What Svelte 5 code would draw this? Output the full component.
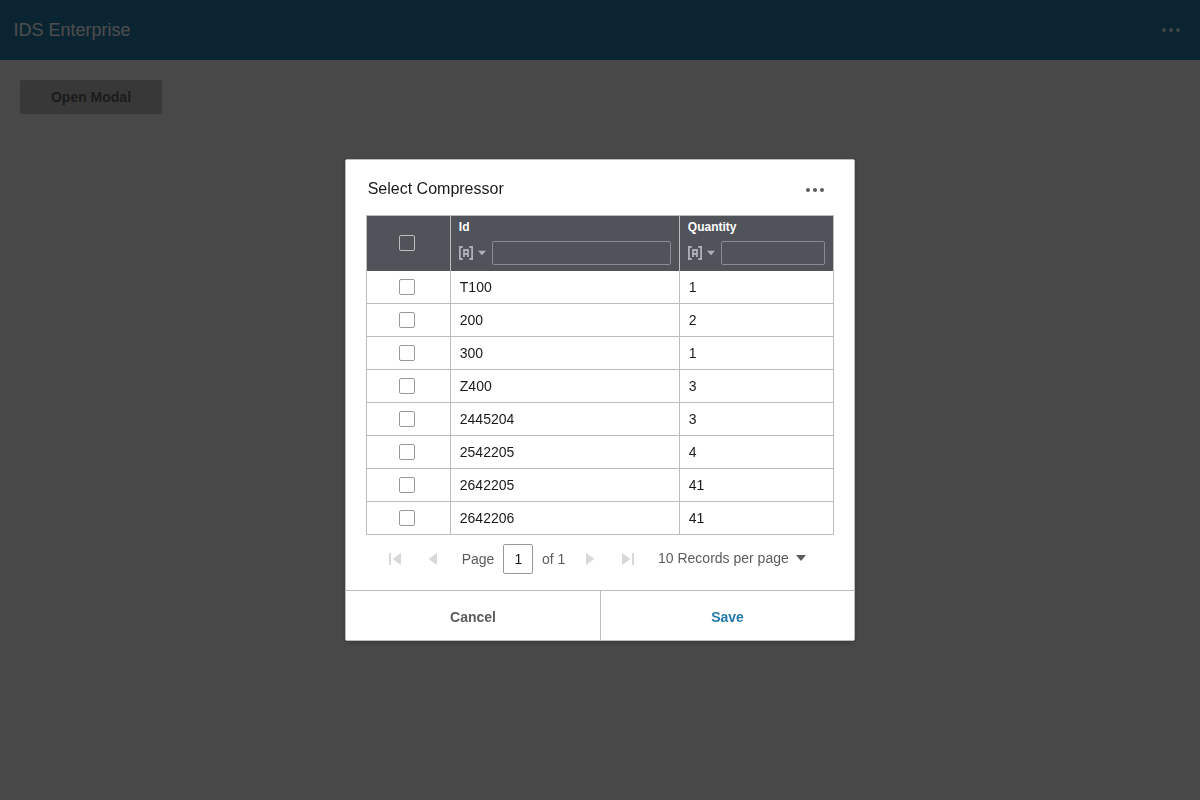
<script>
  const rows = [
    ['T100', '1'], ['200', '2'], ['300', '1'], ['Z400', '3'],
    ['2445204', '3'], ['2542205', '4'], ['2642205', '41'], ['2642206', '41']
  ];
</script>

{#snippet dots()}
  <svg class="dots" width="18" height="4" viewBox="0 0 18 4"><circle cx="2" cy="2" r="2" /><circle cx="9" cy="2" r="2" /><circle cx="16" cy="2" r="2" /></svg>
{/snippet}

{#snippet filter()}
  <div class="filter">
    <svg width="28" height="16" viewBox="0 0 28 16">
      <path class="line" d="M3.7 2H.9v12h2.8M10.3 2h2.8v12h-2.8" />
      <path class="line" d="M5 12V5h4v7M5 9h4" />
      <path d="M19 5.8h8L23 10.3z" />
    </svg>
    <input aria-label="Filter" />
  </div>
{/snippet}

<div class="page">
  <header><span>IDS Enterprise</span>{@render dots()}</header>
  <main><button class="open">Open Modal</button></main>
</div>

<div class="overlay">
  <div class="modal">
    <div class="title"><h1>Select Compressor</h1>{@render dots()}</div>
    <div class="table">
      <div class="row head">
        <div class="check"><span class="box"></span></div>
        <div class="th"><b>Id</b>{@render filter()}</div>
        <div class="th"><b>Quantity</b>{@render filter()}</div>
      </div>
      {#each rows as [id, quantity]}
        <div class="row">
          <div class="check"><span class="box"></span></div>
          <div class="td">{id}</div>
          <div class="td">{quantity}</div>
        </div>
      {/each}
    </div>
    <div class="pager">
      <svg class="first" width="12" height="12" viewBox="0 0 12 12"><path d="M0 0h2v12H0zM12 0v12L3.7 6z" /></svg>
      <svg class="prev" width="9" height="12" viewBox="0 0 9 12"><path d="M9 0v12L.5 6z" /></svg>
      <span class="label">Page</span>
      <input value="1" aria-label="Page number" />
      <span class="of">of 1</span>
      <svg class="next" width="9" height="12" viewBox="0 0 9 12"><path d="M0 0v12L8.5 6z" /></svg>
      <svg class="last" width="12" height="12" viewBox="0 0 12 12"><path d="M0 0v12L8.5 6zM10 0h2v12h-2z" /></svg>
      <span class="size">10 Records per page</span>
      <svg class="caret" width="10" height="6" viewBox="0 0 10 6"><path d="M0 0h10L5 6z" /></svg>
    </div>
    <footer><button>Cancel</button><button class="save">Save</button></footer>
  </div>
</div>

<style>
  :global(body) { background: #f0f0f0; overflow: hidden; }
  .page, .overlay, .page *, .overlay * { box-sizing: border-box; }
  .page, .overlay, button, input { font-family: "Liberation Sans", Arial, sans-serif; font-size: 14px; }
  svg { display: block; flex: none; fill: currentColor; }
  header {
    height: 60px; padding: 0 20px 0 13.5px; background: #2578a9;
    display: flex; align-items: center; justify-content: space-between;
    color: #fff; font-size: 18px;
  }
  header .dots { opacity: .8; }
  main { padding: 20px; }
  .open {
    display: block; width: 142px; height: 34px; border: 0; border-radius: 2px;
    background: #bdbdbd; color: #5c5c5c; font-weight: 700; padding: 0;
  }
  .overlay {
    position: fixed; inset: 0; background: rgba(0, 0, 0, .7);
    display: flex; align-items: center; justify-content: center;
  }
  .modal {
    width: 510px; height: 482px; background: #fff; border: 1px solid #bdbdbd;
    border-radius: 2px; box-shadow: 0 2px 5px rgba(0, 0, 0, .2);
    display: flex; flex-direction: column;
  }
  .title {
    height: 55px; padding: 0 30px 0 21.7px; display: flex;
    align-items: flex-start; justify-content: space-between; color: #5c5c5c;
  }
  h1 { margin: 19px 0 0; font-size: 16px; line-height: 20px; font-weight: 400; color: #1a1a1a; }
  .title .dots { margin-top: 28px; }
  .table { margin: 0 20px; border: 1px solid #bdbdbd; border-bottom: 0; }
  .row { display: grid; grid-template-columns: 84px 229px minmax(0, 1fr); height: 33px; border-bottom: 1px solid #bdbdbd; }
  .row > div:not(:last-child) { border-right: 1px solid #bdbdbd; }
  .head { height: 55px; background: #50535a; border-bottom: 0; color: #fff; }
  .check { display: flex; align-items: center; padding-left: 32px; }
  .head .check { padding-bottom: 1px; }
  .box { width: 16px; height: 16px; border: 1px solid #999; border-radius: 2px; background: #fff; }
  .head .box { background: transparent; border-color: #bdbdbd; }
  .td { padding-left: 8.8px; line-height: 32px; color: #1a1a1a; }
  .th { padding: 4px 8px 0 7.8px; }
  .th b { display: block; font-size: 12px; line-height: 14px; }
  .filter { display: flex; align-items: center; margin: 7px 0 0 .2px; color: #adb0b8; }
  .filter svg { margin-right: 5px; }
  .line { fill: none; stroke: currentColor; stroke-width: 1.8; }
  .filter input {
    flex: 1; min-width: 0; height: 24px; padding: 0 8px; border: 1px solid #888b94;
    border-radius: 2px; background: transparent; color: #fff;
  }
  .pager {
    height: 55px; padding: 0 0 7px 43px; display: flex; align-items: center; color: #5c5c5c;
  }
  .first, .prev, .next, .last { color: #d8d8d8; }
  .prev { margin-left: 27px; }
  .label { width: 33px; margin-left: 24.7px; }
  .pager input {
    width: 30px; height: 30px; margin: 0 9px 0 8.3px; padding: 0 0 0 1px; text-align: center;
    border: 1px solid #999; border-radius: 2px; color: #1a1a1a;
  }
  .of { width: 24px; }
  .next { margin-left: 20px; }
  .last { margin-left: 27px; }
  .size { width: 131px; margin: -2px 7px 0 24px; white-space: nowrap; }
  .caret { margin-top: -2px; }
  footer { flex: 1; border-top: 1px solid #bdbdbd; display: grid; grid-template-columns: 255px 1fr; }
  footer button { border: 0; background: none; padding: 3px 0 0; font-weight: 700; color: #5c5c5c; }
  footer button:first-child { border-right: 1px solid #bdbdbd; }
  footer .save { color: #2578a9; }
</style>
